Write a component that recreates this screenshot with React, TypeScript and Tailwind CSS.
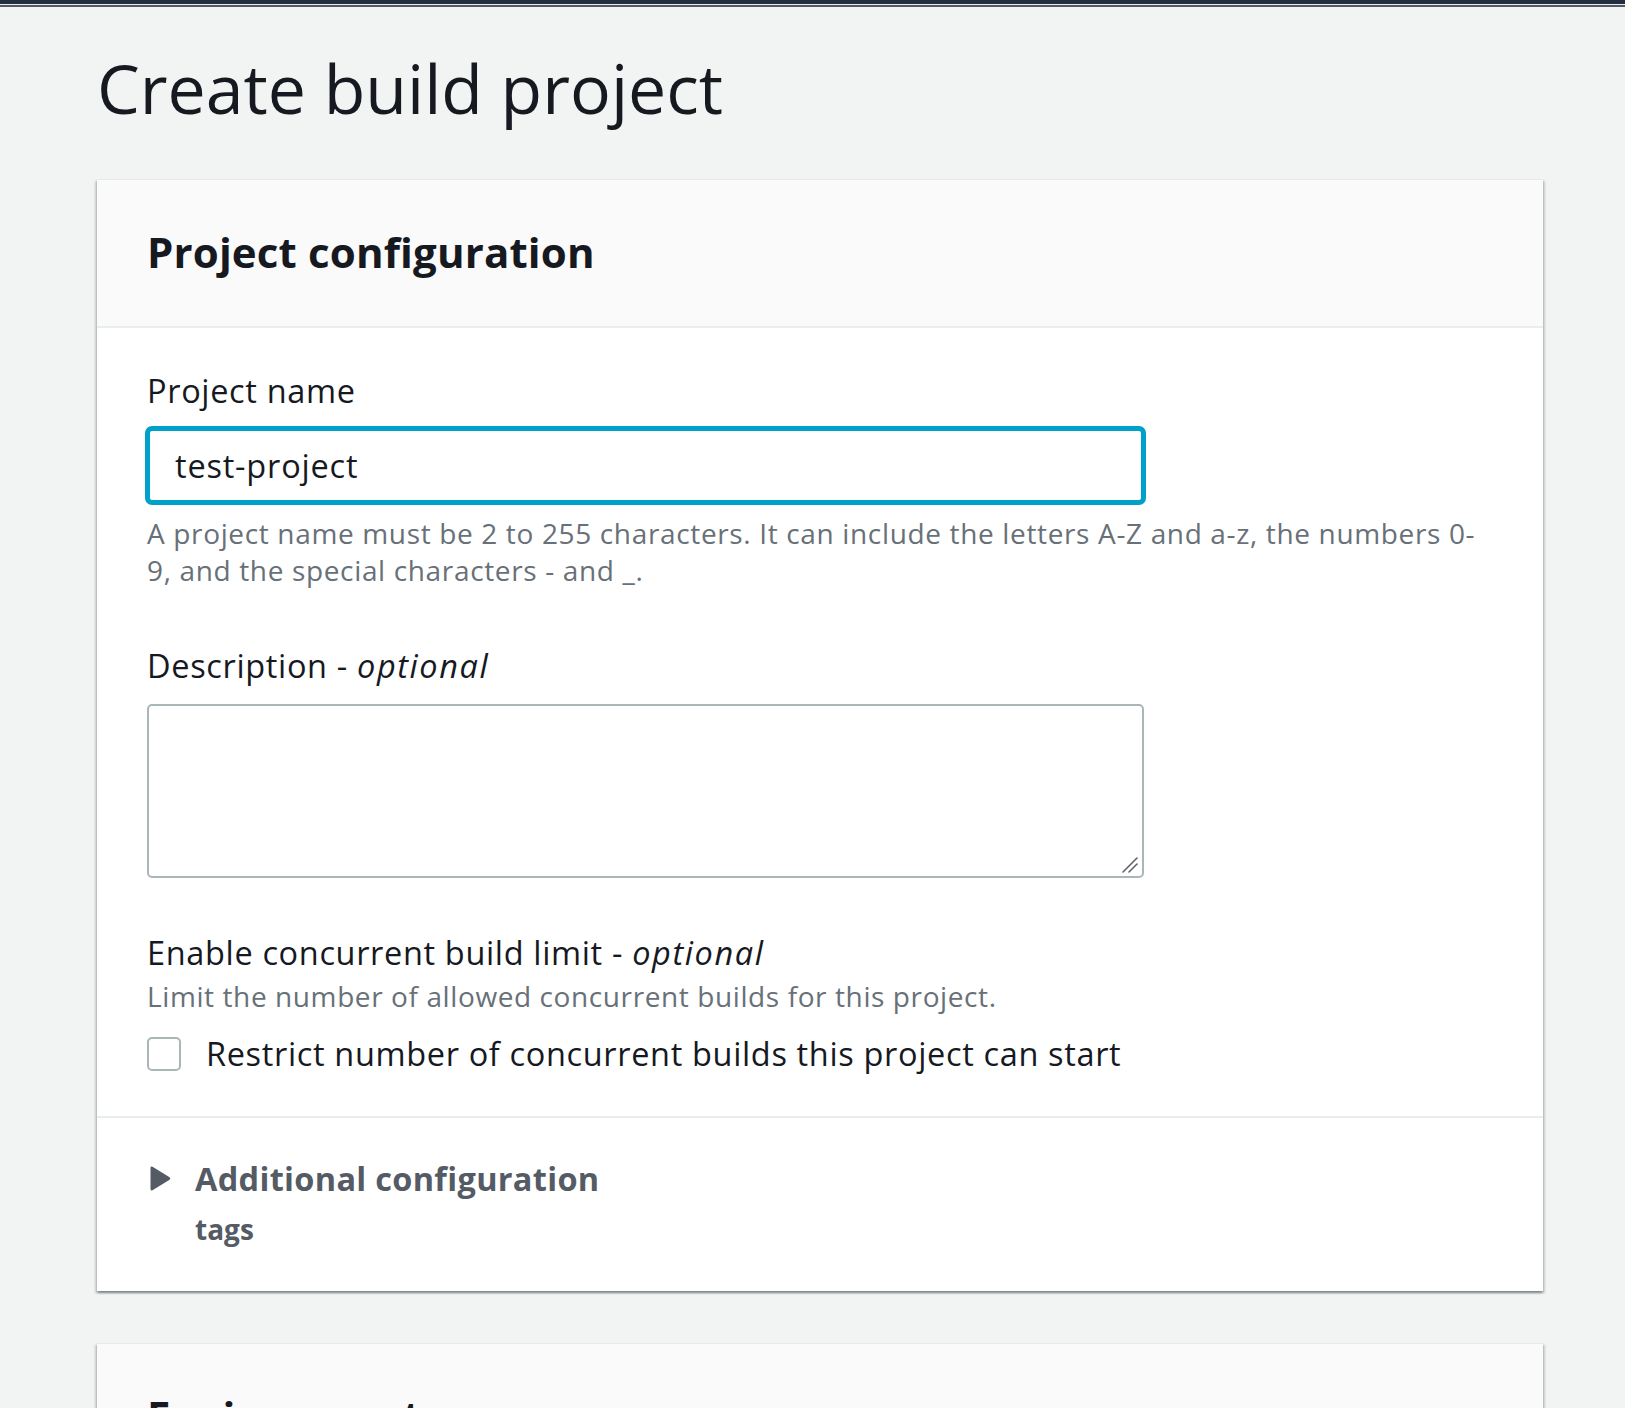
import React from "react";

const Label: React.FC<{ text: string; optional?: boolean }> = ({ text, optional }) => (
  <div className="text-[32.5px] leading-[51px] tracking-[0.65px] text-[#16191f]">
    {text}
    {optional && (
      <>
        {" - "}
        <i className="tracking-[1.6px]">optional</i>
      </>
    )}
  </div>
);

const CardHeader: React.FC<{ title: string }> = ({ title }) => (
  <div className="bg-[#fafafa] px-[50px] pt-[46px] pb-[48px] border-t border-[#e6e9e9] border-b-2 border-b-[#eaeded]">
    <h2 className="text-[42px] leading-[52px] font-bold tracking-[0.15px] text-[#16191f]">{title}</h2>
  </div>
);

const cardShadow =
  "shadow-[0_2px_2px_0_rgba(0,28,36,0.3),2px_2px_2px_0_rgba(0,28,36,0.15),-2px_2px_2px_0_rgba(0,28,36,0.15)]";

export default function App() {
  return (
    <div className="min-h-screen bg-[#f2f3f3] font-['Open_Sans',sans-serif] text-[#16191f]">
      <div className="h-[4px] bg-[#232f3e]" />
      <div className="h-[1px] bg-[#e9ebed]" />
      <div className="h-[2px] bg-[#4f5b6b]" />

      <main className="pl-[97px] pr-[82px] pt-[41px] pb-10">
        <h1 className="text-[68px] leading-[80px] font-normal">Create build project</h1>

        {/* Project configuration */}
        <section className={`mt-[51px] w-[1446px] bg-white ${cardShadow}`}>
          <CardHeader title="Project configuration" />

          <div className="px-[50px] pt-[37px] pb-[37px]">
            <Label text="Project name" />
            <input
              defaultValue="test-project"
              className="mt-[12px] block w-[997px] h-[75px] border-[3px] border-[#00a1c9] rounded-[5px] shadow-[0_0_0_2px_#00a1c9] pl-[25px] text-[32.5px] tracking-[0.8px] text-[#16191f] outline-none bg-white"
            />
            <p className="mt-[12px] text-[28px] leading-[37px] tracking-[0.65px] text-[#687078] whitespace-nowrap">
              A project name must be 2 to 255 characters. It can include the letters A-Z and a-z, the numbers 0-
              <br />
              9, and the special characters - and _.
            </p>

            <div className="mt-[51px]">
              <Label text="Description" optional />
              <div className="relative mt-[13px] w-[997px]">
                <textarea className="block w-[997px] h-[174px] border-2 border-[#aab7b8] rounded-[5px] resize-none outline-none bg-white" />
                <svg
                  className="absolute right-[5px] bottom-[4px]"
                  width="18"
                  height="18"
                  viewBox="0 0 18 18"
                  fill="none"
                  stroke="#5f6368"
                  strokeWidth="1.6"
                  strokeLinecap="round"
                >
                  <path d="M2 16L16 2" />
                  <path d="M8 16L16 8" />
                </svg>
              </div>
            </div>

            <div className="mt-[49px]">
              <Label text="Enable concurrent build limit" optional />
              <div className="text-[28px] leading-[37px] tracking-[0.6px] text-[#687078]">
                Limit the number of allowed concurrent builds for this project.
              </div>
              <label className="mt-[13px] flex items-center h-[51px] gap-[25px]">
                <span className="w-[34px] h-[34px] border-2 border-[#aab7b8] rounded-[5px] bg-white shrink-0" />
                <span className="text-[32.5px] leading-[51px] tracking-[0.65px]">
                  Restrict number of concurrent builds this project can start
                </span>
              </label>
            </div>
          </div>

          <div className="border-t-2 border-[#eaeded] px-[50px] pt-[35px] pb-[43px]">
            <div className="flex items-center">
              <svg className="ml-[3px] mr-[24px]" width="21" height="25" viewBox="0 0 21 25">
                <path
                  d="M2.5 0.8 L19.6 11.2 Q21 12.5 19.6 13.8 L2.5 24.2 Q0.5 25 0.5 23 V2 Q0.5 0 2.5 0.8 Z"
                  fill="#545b64"
                />
              </svg>
              <span className="text-[32.5px] leading-[51px] font-bold tracking-[0.3px] text-[#545b64]">
                Additional configuration
              </span>
            </div>
            <div className="pl-[48px] mt-[7px] text-[28px] leading-[37px] font-bold text-[#545b64]">tags</div>
          </div>
        </section>

        {/* Environment */}
        <section className={`mt-[52px] w-[1446px] bg-white ${cardShadow}`}>
          <CardHeader title="Environment" />
          <div className="h-[200px]" />
        </section>
      </main>
    </div>
  );
}
